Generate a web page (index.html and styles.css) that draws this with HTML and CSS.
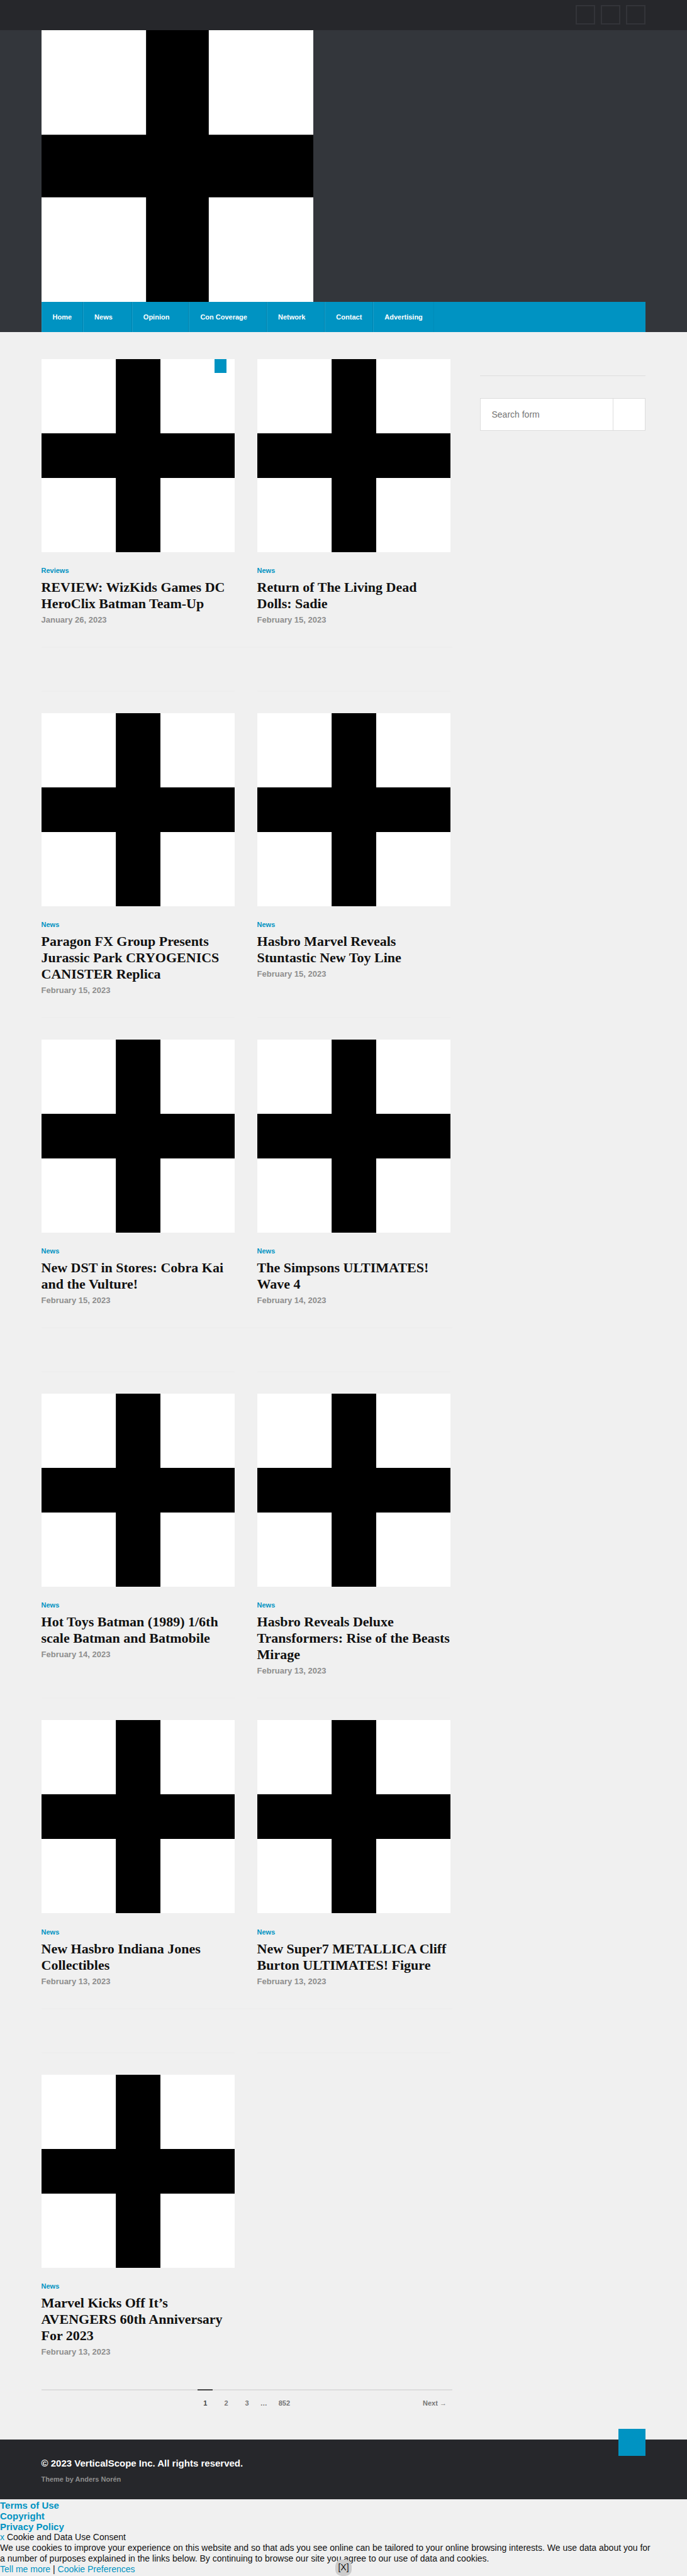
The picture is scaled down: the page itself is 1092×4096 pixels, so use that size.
FILE: index.html
```html
<!DOCTYPE html>
<html lang="en">
<head>
<meta charset="utf-8">
<meta name="viewport" content="width=device-width, initial-scale=1">
<title>News</title>
<link rel="stylesheet" href="styles.css">
</head>
<body>
<svg class="defs" aria-hidden="true">
  <symbol id="cross" viewBox="0 0 26 26">
    <rect width="26" height="26" fill="#fff"/>
    <path d="M10 0h6v10h10v6H16v10h-6V16H0v-6h10z" fill="#000"/>
  </symbol>
</svg>

<div class="topbar">
  <div class="wrap social">
    <a href="#" class="social-link" aria-label="Facebook"></a>
    <a href="#" class="social-link" aria-label="Twitter"></a>
    <a href="#" class="social-link" aria-label="Instagram"></a>
  </div>
</div>

<header class="header">
  <div class="wrap">
    <a href="#" class="logo" aria-label="Site home"><svg class="picture"><use href="#cross"/></svg></a>
    <nav class="nav">
      <a href="#" class="nav-link">Home</a>
      <a href="#" class="nav-link has-menu">News</a>
      <a href="#" class="nav-link has-menu">Opinion</a>
      <a href="#" class="nav-link has-menu">Con Coverage</a>
      <a href="#" class="nav-link has-menu">Network</a>
      <a href="#" class="nav-link">Contact</a>
      <a href="#" class="nav-link">Advertising</a>
    </nav>
  </div>
</header>

<div class="wrap layout">
  <main class="content">
    <div class="posts">
      <article class="post">
        <a href="#" class="thumb" aria-label="REVIEW: WizKids Games DC HeroClix Batman Team-Up"><svg class="picture"><use href="#cross"/></svg><span class="sticky"></span></a>
        <a href="#" class="category">Reviews</a>
        <h2 class="title"><a href="#">REVIEW: WizKids Games DC HeroClix Batman Team-Up</a></h2>
        <p class="date">January 26, 2023</p>
      </article>
      <article class="post">
        <a href="#" class="thumb" aria-label="Return of The Living Dead Dolls: Sadie"><svg class="picture"><use href="#cross"/></svg></a>
        <a href="#" class="category">News</a>
        <h2 class="title"><a href="#">Return of The Living Dead Dolls: Sadie</a></h2>
        <p class="date">February 15, 2023</p>
      </article>
    </div>
    <div class="ad"></div>
    <div class="rules"></div>

    <div class="posts">
      <article class="post">
        <a href="#" class="thumb" aria-label="Paragon FX Group Presents Jurassic Park CRYOGENICS CANISTER Replica"><svg class="picture"><use href="#cross"/></svg></a>
        <a href="#" class="category">News</a>
        <h2 class="title"><a href="#">Paragon FX Group Presents Jurassic Park CRYOGENICS CANISTER Replica</a></h2>
        <p class="date">February 15, 2023</p>
      </article>
      <article class="post">
        <a href="#" class="thumb" aria-label="Hasbro Marvel Reveals Stuntastic New Toy Line"><svg class="picture"><use href="#cross"/></svg></a>
        <a href="#" class="category">News</a>
        <h2 class="title"><a href="#">Hasbro Marvel Reveals Stuntastic New Toy Line</a></h2>
        <p class="date">February 15, 2023</p>
      </article>
    </div>
    <div class="rules"></div>

    <div class="posts">
      <article class="post">
        <a href="#" class="thumb" aria-label="New DST in Stores: Cobra Kai and the Vulture!"><svg class="picture"><use href="#cross"/></svg></a>
        <a href="#" class="category">News</a>
        <h2 class="title"><a href="#">New DST in Stores: Cobra Kai and the Vulture!</a></h2>
        <p class="date">February 15, 2023</p>
      </article>
      <article class="post">
        <a href="#" class="thumb" aria-label="The Simpsons ULTIMATES! Wave 4"><svg class="picture"><use href="#cross"/></svg></a>
        <a href="#" class="category">News</a>
        <h2 class="title"><a href="#">The Simpsons ULTIMATES! Wave 4</a></h2>
        <p class="date">February 14, 2023</p>
      </article>
    </div>
    <div class="ad"></div>
    <div class="rules"></div>

    <div class="posts">
      <article class="post">
        <a href="#" class="thumb" aria-label="Hot Toys Batman (1989) 1/6th scale Batman and Batmobile"><svg class="picture"><use href="#cross"/></svg></a>
        <a href="#" class="category">News</a>
        <h2 class="title"><a href="#">Hot Toys Batman (1989) 1/6th scale Batman and Batmobile</a></h2>
        <p class="date">February 14, 2023</p>
      </article>
      <article class="post">
        <a href="#" class="thumb" aria-label="Hasbro Reveals Deluxe Transformers: Rise of the Beasts Mirage"><svg class="picture"><use href="#cross"/></svg></a>
        <a href="#" class="category">News</a>
        <h2 class="title"><a href="#">Hasbro Reveals Deluxe Transformers: Rise of the Beasts Mirage</a></h2>
        <p class="date">February 13, 2023</p>
      </article>
    </div>
    <div class="rules"></div>

    <div class="posts">
      <article class="post">
        <a href="#" class="thumb" aria-label="New Hasbro Indiana Jones Collectibles"><svg class="picture"><use href="#cross"/></svg></a>
        <a href="#" class="category">News</a>
        <h2 class="title"><a href="#">New Hasbro Indiana Jones Collectibles</a></h2>
        <p class="date">February 13, 2023</p>
      </article>
      <article class="post">
        <a href="#" class="thumb" aria-label="New Super7 METALLICA Cliff Burton ULTIMATES! Figure"><svg class="picture"><use href="#cross"/></svg></a>
        <a href="#" class="category">News</a>
        <h2 class="title"><a href="#">New Super7 METALLICA Cliff Burton ULTIMATES! Figure</a></h2>
        <p class="date">February 13, 2023</p>
      </article>
    </div>
    <div class="ad"></div>
    <div class="rules"></div>

    <div class="posts">
      <article class="post">
        <a href="#" class="thumb" aria-label="Marvel Kicks Off It’s AVENGERS 60th Anniversary For 2023"><svg class="picture"><use href="#cross"/></svg></a>
        <a href="#" class="category">News</a>
        <h2 class="title"><a href="#">Marvel Kicks Off It’s AVENGERS 60th Anniversary For 2023</a></h2>
        <p class="date">February 13, 2023</p>
      </article>
    </div>

    <nav class="pagination" aria-label="Pages">
      <div class="pages">
        <a href="#" class="page current" aria-current="page">1</a>
        <a href="#" class="page">2</a>
        <a href="#" class="page">3</a>
        <span class="dots">…</span>
        <a href="#" class="page">852</a>
      </div>
      <a href="#" class="page next">Next →</a>
    </nav>
  </main>

  <aside class="sidebar">
    <form class="search">
      <input type="search" class="search-field" placeholder="Search form" aria-label="Search form">
      <button type="submit" class="search-button" aria-label="Search"></button>
    </form>
  </aside>
</div>

<footer class="footer">
  <div class="wrap credits">
    <a href="#" class="to-top" aria-label="To the top"></a>
    <p class="copyright">© 2023 VerticalScope Inc. All rights reserved.</p>
    <p class="theme">Theme by <a href="#">Anders Norén</a></p>
  </div>
</footer>

<div class="legal">
  <ul class="legal-links">
    <li><a href="#">Terms of Use</a></li>
    <li><a href="#">Copyright</a></li>
    <li><a href="#">Privacy Policy</a></li>
  </ul>
  <p><a href="#">x</a> Cookie and Data Use Consent</p>
  <p>We use cookies to improve your experience on this website and so that ads you see online can be tailored to your online browsing interests. We use data about you for<br> a number of purposes explained in the links below. By continuing to browse our site you agree to our use of data and cookies.</p>
  <p><a href="#">Tell me more</a> | <a href="#">Cookie Preferences</a></p>
  <div class="dismiss-bar"><button type="button" class="dismiss">[X]</button></div>
</div>
</body>
</html>
```
FILE: styles.css
```css
* {
  box-sizing: border-box;
  margin: 0;
  padding: 0;
}

body {
  background: #f0f0f0;
  color: #111;
  font: 14px/17px "Liberation Sans", Arial, sans-serif;
}

a {
  color: #0093c2;
  text-decoration: none;
}

.defs {
  display: none;
}

.wrap {
  width: 88%;
  margin: 0 auto;
}

.picture {
  display: block;
  width: 100%;
  height: 100%;
}

/* Top bar */
.topbar {
  background: #26272b;
}

.social {
  display: flex;
  justify-content: flex-end;
  gap: 9px;
  padding: 8px 0 9px;
}

.social-link {
  width: 31px;
  height: 31px;
  border: 2px solid #333439;
}

/* Header */
.header {
  background: #33363b;
}

.logo {
  display: block;
  width: 432px;
  max-width: 100%;
  aspect-ratio: 1;
}

.nav {
  display: flex;
  background: #0093c2;
}

.nav-link {
  padding: 0 17px;
  border-left: 1px solid #1a9ec9;
  border-right: 1px solid #0084af;
  color: #fff;
  font-size: 11px;
  font-weight: bold;
  line-height: 48px;
}

.nav-link.has-menu {
  padding-right: 30px;
}

.nav-link:last-child {
  border-right-color: #008cb9;
}

/* Columns */
.layout {
  display: flex;
  justify-content: space-between;
  align-items: flex-start;
  padding: 43px 0 38px;
}

.content {
  width: 68%;
}

.sidebar {
  flex: 0 1 263px;
  min-width: 0;
  margin-top: 26px;
  padding-top: 35px;
  border-top: 1px solid #ddd;
}

/* Posts */
.posts {
  display: grid;
  grid-template-columns: 47% 47%;
  column-gap: 5.5%;
}

.thumb {
  display: block;
  position: relative;
  aspect-ratio: 1;
  margin-bottom: 21px;
}

.sticky {
  position: absolute;
  top: 0;
  right: 13px;
  width: 19px;
  height: 22px;
  background: #0093c2;
}

.category {
  display: block;
  font-size: 11px;
  font-weight: bold;
  line-height: 16px;
}

.title {
  margin: 6px 0 5px;
  font: bold 22px/26px "Liberation Serif", "Times New Roman", serif;
}

.title a {
  color: #111;
}

.date {
  margin-bottom: 34px;
  color: #8e8e8e;
  font-size: 13px;
  font-weight: bold;
  line-height: 16px;
}

.ad {
  height: 70px;
  border-top: 2px solid #eee;
}

.rules {
  display: grid;
  grid-template-columns: 47% 47%;
  column-gap: 5.5%;
  margin-bottom: 34px;
}

.rules::before,
.rules::after {
  content: "";
  height: 2px;
  background: #eee;
}

/* Pagination */
.pagination {
  display: grid;
  grid-template-columns: 1fr auto 1fr;
  margin-top: 17px;
  border-top: 2px solid #ddd;
  font-size: 11px;
  font-weight: bold;
  line-height: 40px;
}

.pages {
  display: flex;
  grid-column: 2;
  gap: 9px;
  margin-top: -2px;
  color: #767676;
}

.page {
  padding: 0 9px;
  border-top: 2px solid transparent;
  color: #767676;
}

.page.current {
  border-color: #444;
  color: #444;
}

.dots {
  padding-top: 2px;
}

.next {
  justify-self: end;
  margin-top: -2px;
}

/* Search */
.search {
  display: flex;
  height: 52px;
  border: 1px solid #ddd;
  background: #fff;
}

.search-field {
  flex: 1;
  min-width: 0;
  padding: 0 17px;
  border: 0;
  background: none;
  font: inherit;
}

.search-field::placeholder {
  color: #757575;
}

.search-button {
  width: 51px;
  border: 0;
  border-left: 1px solid #ddd;
  background: none;
}

/* Footer */
.footer {
  background: #26272b;
}

.credits {
  position: relative;
  padding: 29px 0 24px;
}

.to-top {
  position: absolute;
  top: -17px;
  right: 0;
  width: 43px;
  height: 43px;
  background: #0093c2;
}

.copyright {
  margin-bottom: 9px;
  color: #fff;
  font-size: 15px;
  font-weight: bold;
}

.theme {
  color: #8e8e8e;
  font-size: 11px;
  font-weight: bold;
  line-height: 16px;
}

.theme a {
  color: inherit;
}

/* Legal notice */
.legal {
  position: relative;
  padding: 1px 0 2px;
}

.legal-links {
  list-style: none;
  font-size: 15px;
  font-weight: bold;
}

.dismiss-bar {
  display: flex;
  justify-content: center;
  position: absolute;
  inset: auto 0 0;
  pointer-events: none;
}

.dismiss {
  height: 26px;
  padding: 0 4px;
  border: 0;
  border-radius: 10px;
  background: #ccc;
  color: #111;
  font: inherit;
  pointer-events: auto;
}
```
